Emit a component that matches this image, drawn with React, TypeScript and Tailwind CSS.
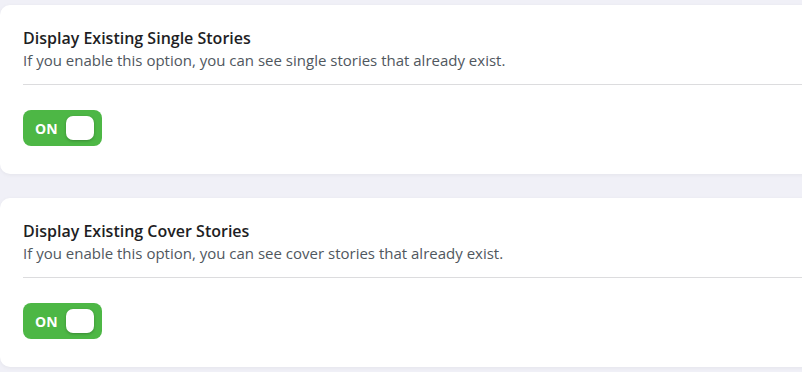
import React from "react";

const options = [
    {
        title: "Display Existing Single Stories",
        text: "If you enable this option, you can see single stories that already exist.",
    },
    {
        title: "Display Existing Cover Stories",
        text: "If you enable this option, you can see cover stories that already exist.",
    },
];

const Toggle = () => (
    <button className="flex h-[36px] w-[79px] items-center justify-between rounded-[8px] bg-[#4db745] pl-[12px] pr-[8px]">
        <span className="text-[14px] font-bold text-white">ON</span>
        <span className="h-[24px] w-[28px] rounded-[7px] bg-white shadow-[0_1px_3px_rgba(0,0,0,0.25)]" />
    </button>
);

const App = () => {
    return (
        <div
            className="flex h-[372px] w-[802px] flex-col gap-[24px] overflow-hidden bg-[#f0f0f7] pt-[5px]"
            style={{ fontFamily: '"Open Sans", "Noto Sans", sans-serif' }}
        >
            {options.map((o) => (
                <div
                    key={o.title}
                    className="-mr-[20px] h-[169px] shrink-0 rounded-[10px] bg-white pl-[23px] pt-[22px] shadow-[0_1px_4px_rgba(0,0,0,0.05)]"
                >
                    <h3 className="text-[16px] font-semibold leading-[22px] text-[#1e1e24]">
                        {o.title}
                    </h3>
                    <p className="text-[15px] leading-[22px] text-[#50575e]">
                        {o.text}
                    </p>
                    <div className="mt-[13px] h-px bg-[#dcdcde]" />
                    <div className="mt-[25px]">
                        <Toggle />
                    </div>
                </div>
            ))}
        </div>
    );
};

export default App;
